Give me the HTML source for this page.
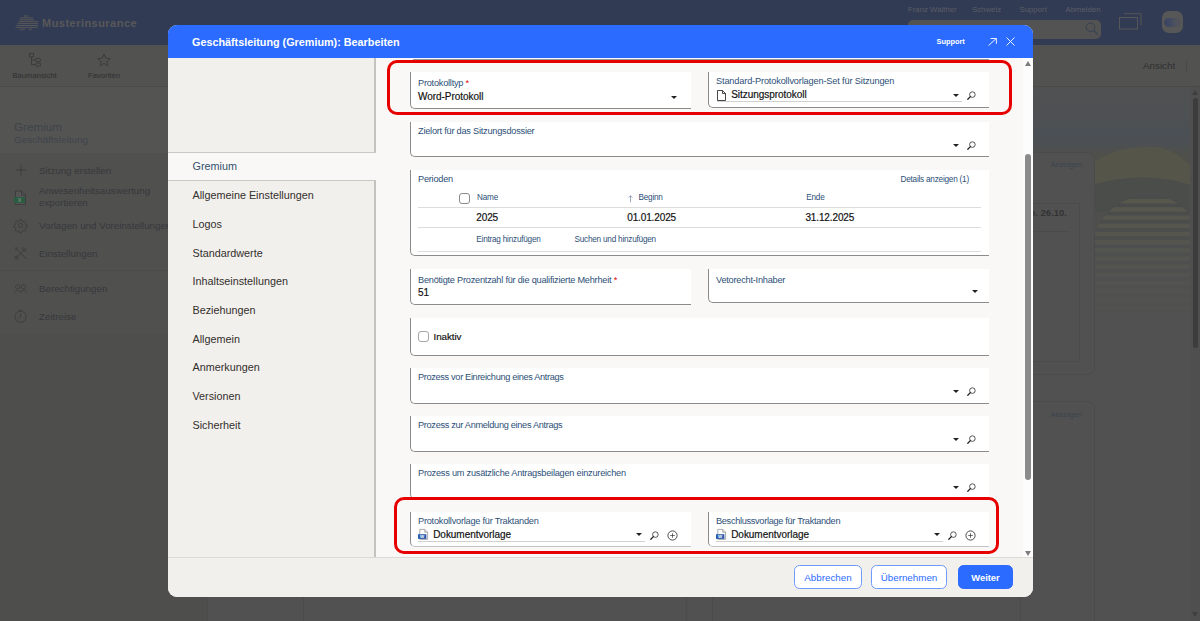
<!DOCTYPE html>
<html lang="de">
<head>
<meta charset="utf-8">
<title>Geschäftsleitung (Gremium): Bearbeiten</title>
<style>
*{box-sizing:border-box;margin:0;padding:0}
html,body{width:1200px;height:621px;overflow:hidden}
body{font-family:"Liberation Sans",sans-serif;background:#50504f;position:relative;color:#222}
.abs{position:absolute}
/* ---------- dimmed background app ---------- */
#topbar{position:absolute;left:0;top:0;width:1200px;height:45px;background:#323b54}
#toolbar{position:absolute;left:0;top:45px;width:1200px;height:42px;background:#525251;border-bottom:1px solid #4a4a49}
.bgt{position:absolute;white-space:nowrap;color:#303030;font-size:10px;line-height:12px}
.side{position:absolute;white-space:nowrap;color:#37383b;font-size:9.75px;line-height:12px;left:39px}
/* ---------- dialog ---------- */
#dlg{position:absolute;left:168px;top:25px;width:865px;height:571.500px;border-radius:9px;background:#f9f8f6;overflow:hidden}
#dhead{position:absolute;left:0;top:0;width:865px;height:33px;background:#2b6bff;color:#fff}
#dtitle{position:absolute;left:24px;top:9.500px;font-size:10.8px;font-weight:bold;line-height:15px;white-space:nowrap}
#dnav{position:absolute;left:0;top:33px;width:208px;height:499px;background:#f2f0ec;border-right:2px solid #c4c3c0}
#dnavsel{position:absolute;left:0;top:94px;width:208px;height:29px;background:#f9f8f6;border-top:1px solid #c9c8c5;border-bottom:1px solid #c9c8c5}
.ni{position:absolute;left:24.500px;font-size:10.800px;line-height:14px;color:#322f2d;white-space:nowrap}
#dfoot{position:absolute;left:0;top:532px;width:865px;height:40px;background:#f2f0ec;border-top:1px solid #dcdad6}
.btn{position:absolute;top:7.300px;height:24px;border-radius:5.500px;font-size:9.800px;line-height:23px;text-align:center;border:1px solid #6e9aff;color:#2b6bff;background:#fff}
.btn.pri{background:#2b6bff;border-color:#2b6bff;color:#fff;font-weight:bold;font-size:9.4px}
/* fields (coordinates are page coordinates inside #content which is at 0,0 of page) */
#content{position:absolute;left:0;top:0;width:1200px;height:621px;pointer-events:none}
.fld{position:absolute;background:#fff;border-left:1px solid #8b8b8b;border-bottom:1px solid #8b8b8b;border-bottom-left-radius:5px}
.lbl{position:absolute;left:7px;top:6.200px;font-size:9.200px;letter-spacing:-0.230px;line-height:11px;color:#2d4f78;white-space:nowrap}
.val{position:absolute;font-size:10px;letter-spacing:-0.040px;-webkit-text-stroke:0.180px #111;line-height:13px;color:#111;white-space:nowrap}
.req{color:#e00000}
.uline{position:absolute;height:1px;background:#d0d0d0}
.red{position:absolute;border:3.700px solid #e60000;border-radius:10px}
.tri{position:absolute;width:0;height:0;border-left:3px solid transparent;border-right:3px solid transparent;border-top:3.300px solid #222}
.cb{position:absolute;width:11px;height:11px;border:1px solid #8a8a8a;border-radius:3px;background:#fff}
.tl{position:absolute;height:1px;background:#dddcda}
.th{position:absolute;font-size:8.200px;letter-spacing:-0.220px;line-height:10px;color:#2d4f78;white-space:nowrap}
.td{position:absolute;font-size:10px;letter-spacing:-0.120px;-webkit-text-stroke:0.180px #111;line-height:13px;color:#111;white-space:nowrap}
svg{position:absolute;overflow:visible}
</style>
</head>
<body>
<div id="topbar"></div>
<div id="toolbar"></div>
<div id="bgapp">
<!-- dimmed background application -->
<div class="abs" style="left:0;top:87px;width:207px;height:65.500px;background:#545453"></div>
<div class="abs" style="left:0;top:152.500px;width:207px;height:181.500px;background:#50504f"></div>
<div class="abs" style="left:0;top:334px;width:207px;height:287px;background:#4e4e4d"></div>
<div class="abs" style="left:207px;top:87px;width:993px;height:534px;background:#515151"></div>
<div class="abs" style="left:0;top:269.5px;width:207px;height:1px;background:#4a4a49"></div>
<!-- logo -->
<svg style="left:15px;top:14.500px" width="24" height="16" viewBox="0 0 24 16"><g stroke="#585858" stroke-width="1" fill="none"><path d="M9 1H13M5 2.900H18M4.500 4.800H19M3.500 6.700H23.500M2.500 8.600H23M1.500 10.500H23M0.500 12.400H22.500M4.500 14.300H10M14 14.300H17"/></g></svg>
<div class="abs" style="left:42px;top:16px;font-size:11px;line-height:15px;font-weight:bold;color:#585858;letter-spacing:0.470px;white-space:nowrap">Musterinsurance</div>
<!-- toolbar -->
<svg style="left:29px;top:53px" width="13" height="14" viewBox="0 0 13 14"><g stroke="#3a3a3a" stroke-width="0.9" fill="none"><rect x="0.5" y="0.5" width="4" height="3.4"/><rect x="6.8" y="5.4" width="4.6" height="3.2" rx="0.8"/><rect x="6.8" y="10" width="4.6" height="3.2" rx="0.8"/><path d="M2.5 4V11.6H6.8M2.5 7H6.8"/></g></svg>
<svg style="left:97px;top:53px" width="14" height="14" viewBox="0 0 14 14"><path d="M7 1 L8.8 5.2 L13.3 5.5 L9.8 8.4 L10.9 12.8 L7 10.4 L3.1 12.8 L4.2 8.4 L0.7 5.5 L5.2 5.2 Z" fill="none" stroke="#3a3a3a" stroke-width="0.9" stroke-linejoin="round"/></svg>
<div class="bgt" style="left:12.500px;top:70px;font-size:7.65px">Baumansicht</div>
<div class="bgt" style="left:88px;top:70px;font-size:7.7px">Favoriten</div>
<div class="bgt" style="left:1143px;top:59px;font-size:9.8px;line-height:14px">Ansicht</div>
<!-- sidebar -->
<div class="abs" style="left:14px;top:119px;font-size:11.700px;line-height:15px;color:#3e434a;white-space:nowrap">Gremium</div>
<div class="abs" style="left:14px;top:133px;font-size:9.950px;line-height:13px;color:#3f444b;white-space:nowrap">Geschäftsleitung</div>
<svg style="left:15px;top:164px" width="12" height="12" viewBox="0 0 12 12"><path d="M6 0.5V11.5M0.5 6H11.5" stroke="#3b3b3b" stroke-width="0.8" fill="none"/></svg>
<div class="side" style="top:164.500px">Sitzung erstellen</div>
<svg style="left:14px;top:190px" width="12" height="15" viewBox="0 0 12 15"><path d="M1.500 1H7.500L11.500 5V14.500H1.500Z" fill="#555555" stroke="#3b3b3b" stroke-width="0.900"/><path d="M7.500 1V5H11.500" fill="none" stroke="#3b3b3b" stroke-width="0.900"/><rect x="0" y="7" width="11" height="6" fill="#2b5c42"/><text x="5.700" y="11.700" font-size="5.500" font-weight="bold" fill="#708a7c" text-anchor="middle" font-family="Liberation Sans, sans-serif">X</text></svg>
<div class="side" style="top:185.200px">Anwesenheitsauswertung</div>
<div class="side" style="top:197.400px">exportieren</div>
<svg style="left:14px;top:218.5px" width="13" height="13" viewBox="0 0 13 13"><g fill="none" stroke="#3b3b3b" stroke-width="0.8"><circle cx="6.5" cy="6.5" r="2.1"/><path d="M5.5 0.6h2l.4 1.6 1.2.5 1.4-.9 1.4 1.4-.9 1.4.5 1.2 1.6.4v2l-1.6.4-.5 1.2.9 1.4-1.4 1.4-1.4-.9-1.2.5-.4 1.6h-2l-.4-1.6-1.2-.5-1.4.9-1.4-1.4.9-1.4-.5-1.2-1.600-.4v-2l1.600-.4.5-1.200-.9-1.400 1.400-1.400 1.400.9 1.200-.5z"/></g></svg>
<div class="side" style="top:219.800px">Vorlagen und Voreinstellungen</div>
<svg style="left:14px;top:246px" width="14" height="14" viewBox="0 0 14 14"><g fill="none" stroke="#3b3b3b" stroke-width="0.9"><path d="M1 1.5L12.5 13M12.5 1.5L1.5 12.5"/><circle cx="2.6" cy="11.6" r="1.6"/><path d="M9 1.2a2.800 2.800 0 0 0 3.600 3.600"/><path d="M1.2 4.200L4 1.400"/></g></svg>
<div class="side" style="top:247.800px">Einstellungen</div>
<svg style="left:14px;top:284px" width="13" height="10" viewBox="0 0 13 10"><g fill="none" stroke="#3b3b3b" stroke-width="0.8"><circle cx="3.6" cy="2.800" r="2.100"/><circle cx="9.4" cy="2.800" r="2.100"/><path d="M0.5 8.500C1 5.800 6.200 5.800 6.500 8.500M6.500 8.500C7 5.800 12.200 5.800 12.600 8.500"/></g></svg>
<div class="side" style="top:283px">Berechtigungen</div>
<svg style="left:14px;top:310px" width="13" height="13" viewBox="0 0 13 13"><g fill="none" stroke="#3b3b3b" stroke-width="0.8"><circle cx="6.500" cy="6.800" r="5.600"/><path d="M6.500 3.200V7L4.600 8.600M4.500 0.500H8"/></g></svg>
<div class="side" style="top:310.5px">Zeitreise</div>
<!-- top right -->
<div class="abs" style="left:908px;top:5px;font-size:7.800px;line-height:10px;color:#5b5d64;white-space:nowrap">Franz Walther</div>
<div class="abs" style="left:972px;top:5px;font-size:7.800px;line-height:10px;color:#5b5d64;white-space:nowrap">Schweiz</div>
<div class="abs" style="left:1019.5px;top:5px;font-size:7.800px;line-height:10px;color:#5b5d64;white-space:nowrap">Support</div>
<div class="abs" style="left:1065.5px;top:5px;font-size:7.800px;line-height:10px;color:#5b5d64;white-space:nowrap">Abmelden</div>
<div class="abs" style="left:908px;top:20px;width:193px;height:18.500px;border-radius:5px;background:#535353"></div>
<svg style="left:1084.500px;top:22px" width="14" height="14" viewBox="0 0 14 14"><circle cx="5.500" cy="5.300" r="4.300" fill="none" stroke="#394153" stroke-width="1"/><path d="M8.700 8.500L12.800 12.600" stroke="#394153" stroke-width="1.300"/></svg>
<svg style="left:1119px;top:13px" width="24" height="18" viewBox="0 0 24 18"><g fill="none" stroke="#575757" stroke-width="1"><rect x="0.500" y="4.500" width="18" height="11.500"/><path d="M5 0.700H22V12.500"/></g></svg>
<div class="abs" style="left:1161.500px;top:11.300px;width:21.500px;height:21.500px;border-radius:7px;background:#575757"></div>
<div class="abs" style="left:1164px;top:18px;width:16.500px;height:8.500px;border-radius:4.500px;background:linear-gradient(90deg,#3a4460 0%,#3f4964 30%,#52545c 75%,#4e515a 100%)"></div>
<!-- right content: image, cards, scrollbar -->
<svg style="left:1033px;top:87px" width="157" height="270" viewBox="0 0 157 270">
<defs>
<linearGradient id="sky" x1="0" y1="0" x2="0" y2="1"><stop offset="0" stop-color="#4f5152"/><stop offset="0.130" stop-color="#4e5153"/><stop offset="0.170" stop-color="#4a4f55"/><stop offset="0.210" stop-color="#4c5053"/><stop offset="0.250" stop-color="#4f504b"/><stop offset="0.600" stop-color="#4e4f4b"/><stop offset="0.800" stop-color="#50504e"/><stop offset="1" stop-color="#515151"/></linearGradient>
<linearGradient id="fade" x1="0" y1="0" x2="0" y2="1"><stop offset="0" stop-color="#515151" stop-opacity="0"/><stop offset="0.450" stop-color="#515151" stop-opacity="0"/><stop offset="0.720" stop-color="#515151" stop-opacity="0.750"/><stop offset="0.900" stop-color="#515151" stop-opacity="1"/><stop offset="1" stop-color="#515151" stop-opacity="1"/></linearGradient>
<clipPath id="dome"><path d="M58 270 V170 C58 130 88 108 116 108 C144 108 170 130 170 170 V270 Z"/></clipPath>
</defs>
<rect width="157" height="270" fill="url(#sky)"/>
<path d="M45 92 C62 70 80 62 110 60 C130 58 145 66 157 78 V110 H45Z" fill="#55554a"/>
<path d="M55 100 C80 90 120 86 157 98 V125 H55Z" fill="#4b4d4b"/>
<g clip-path="url(#dome)"><rect x="55" y="105" width="105" height="165" fill="#4a4c4c"/><g fill="#57574e"><rect x="55" y="112" width="105" height="4.500"/><rect x="55" y="120.2" width="105" height="4.500"/><rect x="55" y="128.4" width="105" height="4.500"/><rect x="55" y="136.6" width="105" height="4.500"/><rect x="55" y="144.8" width="105" height="4.500"/><rect x="55" y="153" width="105" height="4.500"/><rect x="55" y="161.2" width="105" height="4.500"/><rect x="55" y="169.4" width="105" height="4.500"/><rect x="55" y="177.6" width="105" height="4.500"/><rect x="55" y="185.8" width="105" height="4.500"/><rect x="55" y="194" width="105" height="4.500"/><rect x="55" y="202.2" width="105" height="4.500"/><rect x="55" y="210.4" width="105" height="4.500"/><rect x="55" y="218.6" width="105" height="4.500"/><rect x="55" y="226.8" width="105" height="4.500"/><rect x="55" y="235" width="105" height="4.500"/><rect x="55" y="243.2" width="105" height="4.500"/><rect x="55" y="251.4" width="105" height="4.500"/><rect x="55" y="259.6" width="105" height="4.500"/><rect x="55" y="267.8" width="105" height="4.500"/></g></g>
<rect width="157" height="270" fill="url(#fade)"/>
</svg>
<div class="abs" style="left:1020px;top:152px;width:74.500px;height:223px;border-radius:0 8px 8px 0;background:#515151;border:1px solid #4b4b4b"></div>
<div class="abs" style="left:1020px;top:203px;width:60px;height:159px;border:1px solid #4c4c4c"></div><div class="abs" style="left:1033px;top:231px;width:37px;height:1px;background:#4b4b4b"></div>
<div class="abs" style="left:1020px;top:400.500px;width:74.500px;height:240px;border-radius:0 8px 0 0;background:#515151;border:1px solid #4b4b4b"></div>
<div class="abs" style="left:1050.500px;top:160px;font-size:7.600px;line-height:10px;color:#3b444e;white-space:nowrap">Anzeigen</div>
<div class="abs" style="left:1050.500px;top:409.500px;font-size:7.600px;line-height:10px;color:#3b444e;white-space:nowrap">Anzeigen</div>
<div class="abs" style="left:1029.500px;top:206.500px;font-size:9.500px;line-height:12px;font-weight:bold;color:#333;white-space:nowrap">o. 26.10.</div>
<div class="abs" style="left:1190px;top:87px;width:10px;height:534px;background:#4f4f4f"></div>
<div class="abs" style="left:1192.500px;top:98px;width:5px;height:250px;border-radius:3px;background:#3c3c3c"></div>
<div class="abs" style="left:1191.500px;top:90px;width:0;height:0;border-left:3.500px solid transparent;border-right:3.500px solid transparent;border-bottom:5px solid #3f3f3f"></div>
<div class="abs" style="left:1191.500px;top:612px;width:0;height:0;border-left:3.500px solid transparent;border-right:3.500px solid transparent;border-top:5px solid #3f3f3f"></div>
<!-- faint panel edges beneath the dialog -->
<div class="abs" style="left:207px;top:597px;width:1px;height:24px;background:#4b4b4b"></div>
<div class="abs" style="left:303px;top:597px;width:1px;height:24px;background:#4b4b4b"></div>
<div class="abs" style="left:712px;top:597px;width:1px;height:24px;background:#4b4b4b"></div>
<div class="abs" style="left:686px;top:597px;width:1px;height:24px;background:#4c4c4c"></div>
<div class="abs" style="left:1186px;top:60px;width:1px;height:12px;background:#4a4a4a"></div>
</div>

<div id="dlg">
  <div id="dhead">
    <div id="dtitle">Geschäftsleitung (Gremium): Bearbeiten</div>
    <div class="abs" style="left:768.500px;top:11.500px;font-size:7.400px;line-height:10px;font-weight:bold;color:#fff;white-space:nowrap">Support</div>
    <svg style="left:819.500px;top:12.500px" width="9" height="8" viewBox="0 0 9 8"><path d="M0.500 7.500L8.200 0.600M2.600 0.500H8.400V5.800" fill="none" stroke="#fff" stroke-width="0.900"/></svg>
    <svg style="left:837.500px;top:12px" width="9" height="9" viewBox="0 0 9 9"><path d="M0.500 0.500L8.500 8.500M8.500 0.500L0.500 8.500" fill="none" stroke="#fff" stroke-width="0.900"/></svg>
  </div>
  <div id="dnav">
    <div id="dnavsel"></div>
    <div class="ni" style="top:101.10px;color:#34506f">Gremium</div>
    <div class="ni" style="top:130.00px">Allgemeine Einstellungen</div>
    <div class="ni" style="top:158.70px">Logos</div>
    <div class="ni" style="top:187.50px">Standardwerte</div>
    <div class="ni" style="top:216.20px">Inhaltseinstellungen</div>
    <div class="ni" style="top:244.90px">Beziehungen</div>
    <div class="ni" style="top:273.70px">Allgemein</div>
    <div class="ni" style="top:302.40px">Anmerkungen</div>
    <div class="ni" style="top:331.20px">Versionen</div>
    <div class="ni" style="top:359.90px">Sicherheit</div>
  </div>
  <div id="dfoot">
    <div class="btn" style="left:626px;width:68px">Abbrechen</div>
    <div class="btn" style="left:703px;width:76px">Übernehmen</div>
    <div class="btn pri" style="left:790px;width:55px">Weiter</div>
  </div>
</div>
<div id="content">
<div class="abs" style="left:413px;top:58.700px;width:576px;height:1px;background:#9a9a9a"></div>
<div class="fld" style="left:410px;top:72px;width:281px;height:36.5px"><div class="lbl">Protokolltyp <span class="req">*</span></div><div class="val" style="left:7px;top:18.2px">Word-Protokoll</div><div class="tri" style="left:260px;top:24px"></div></div>
<div class="fld" style="left:708px;top:72px;width:281px;height:36px"><div class="lbl" style="top:3.700px;letter-spacing:-0.150px">Standard-Protokollvorlagen-Set für Sitzungen</div><svg style="left:8px;top:17.5px" width="9" height="11" viewBox="0 0 9 11"><path d="M0.5 0.5 H5.5 L8.5 3.5 V10.5 H0.5 Z M5.5 0.5 V3.5 H8.5" fill="#fff" stroke="#333" stroke-width="0.9" stroke-linejoin="round"/></svg><div class="val" style="left:22.200px;top:16.4px">Sitzungsprotokoll</div><div class="uline" style="left:8px;top:29px;width:245px"></div><div class="tri" style="left:244px;top:22px"></div><svg style="left:258px;top:19px" width="9" height="9" viewBox="0 0 9 9"><circle cx="5.400" cy="3.600" r="2.800" fill="none" stroke="#2a2a2a" stroke-width="0.800"/><path d="M3.400 5.600 L0.800 8.200" stroke="#222" stroke-width="1.300" fill="none" stroke-linecap="round"/></svg></div>
<div class="fld" style="left:410px;top:121.5px;width:579px;height:35px"><div class="lbl" style="top:4.6px">Zielort für das Sitzungsdossier</div><div class="tri" style="left:542px;top:22px"></div><svg style="left:556px;top:19px" width="9" height="9" viewBox="0 0 9 9"><circle cx="5.400" cy="3.600" r="2.800" fill="none" stroke="#2a2a2a" stroke-width="0.800"/><path d="M3.400 5.600 L0.800 8.200" stroke="#222" stroke-width="1.300" fill="none" stroke-linecap="round"/></svg></div>
<div class="fld" style="left:410px;top:170px;width:579px;height:86px"><div class="lbl" style="top:3.8px">Perioden</div><div class="th" style="left:489.500px;top:4.800px">Details anzeigen (1)</div><div class="cb" style="left:47.500px;top:22.500px"></div><div class="th" style="left:66px;top:22.800px">Name</div><svg style="left:216.500px;top:24.500px" width="5" height="8" viewBox="0 0 5 8"><path d="M2.500 7.200V0.800M0.700 2.600L2.500 0.700L4.300 2.600" fill="none" stroke="#5a7191" stroke-width="0.600"/></svg><div class="th" style="left:227.500px;top:22.800px">Beginn</div><div class="th" style="left:395.300px;top:22.800px">Ende</div><div class="tl" style="left:7px;top:37px;width:562.500px"></div><div class="td" style="left:65.300px;top:40.7px">2025</div><div class="td" style="left:216.200px;top:40.7px">01.01.2025</div><div class="td" style="left:394.400px;top:40.7px">31.12.2025</div><div class="tl" style="left:7px;top:57px;width:562.500px"></div><div class="th" style="left:65.300px;top:64.800px">Eintrag hinzufügen</div><div class="th" style="left:163.500px;top:64.800px">Suchen und hinzufügen</div><div class="tl" style="left:7px;top:81px;width:562.500px"></div></div>
<div class="fld" style="left:410px;top:268.5px;width:281px;height:36.5px"><div class="lbl">Benötigte Prozentzahl für die qualifizierte Mehrheit <span class="req">*</span></div><div class="val" style="left:7px;top:17.2px">51</div></div>
<div class="fld" style="left:708px;top:268.5px;width:281px;height:34px"><div class="lbl">Vetorecht-Inhaber</div><div class="tri" style="left:263px;top:21px"></div></div>
<div class="fld" style="left:410px;top:317.5px;width:579px;height:38px"><div class="cb" style="left:6.800px;top:13.500px;border-color:#a6a6a6"></div><div class="val" style="left:22.600px;top:12.600px;font-size:9.800px;letter-spacing:-0.080px">Inaktiv</div></div>
<div class="fld" style="left:410px;top:367.5px;width:579px;height:36px"><div class="lbl" style="top:4.6px;letter-spacing:-0.330px">Prozess vor Einreichung eines Antrags</div><div class="tri" style="left:542px;top:22px"></div><svg style="left:556px;top:19px" width="9" height="9" viewBox="0 0 9 9"><circle cx="5.400" cy="3.600" r="2.800" fill="none" stroke="#2a2a2a" stroke-width="0.800"/><path d="M3.400 5.600 L0.800 8.200" stroke="#222" stroke-width="1.300" fill="none" stroke-linecap="round"/></svg></div>
<div class="fld" style="left:410px;top:415.5px;width:579px;height:36px"><div class="lbl" style="top:4.6px;letter-spacing:-0.310px">Prozess zur Anmeldung eines Antrags</div><div class="tri" style="left:542px;top:22px"></div><svg style="left:556px;top:19px" width="9" height="9" viewBox="0 0 9 9"><circle cx="5.400" cy="3.600" r="2.800" fill="none" stroke="#2a2a2a" stroke-width="0.800"/><path d="M3.400 5.600 L0.800 8.200" stroke="#222" stroke-width="1.300" fill="none" stroke-linecap="round"/></svg></div>
<div class="fld" style="left:410px;top:464px;width:579px;height:35px"><div class="lbl" style="top:3.8px">Prozess um zusätzliche Antragsbeilagen einzureichen</div><div class="tri" style="left:542px;top:22px"></div><svg style="left:556px;top:19px" width="9" height="9" viewBox="0 0 9 9"><circle cx="5.400" cy="3.600" r="2.800" fill="none" stroke="#2a2a2a" stroke-width="0.800"/><path d="M3.400 5.600 L0.800 8.200" stroke="#222" stroke-width="1.300" fill="none" stroke-linecap="round"/></svg></div>
<div class="fld" style="left:410px;top:512px;width:281px;height:34.500px;border-bottom-color:#c4c4c4"><div class="lbl" style="top:3.8px">Protokollvorlage für Traktanden</div><svg style="left:7.200px;top:17px" width="10" height="11" viewBox="0 0 10 11"><path d="M1.800 0.400 H6.800 L9.600 3.200 V10.400 H1.800 Z" fill="#fff" stroke="#8a8a8a" stroke-width="0.700" stroke-linejoin="round"/><path d="M6.800 0.400 V3.200 H9.600" fill="#e4e4e4" stroke="#8a8a8a" stroke-width="0.700" stroke-linejoin="round"/><rect x="0" y="5.200" width="8.400" height="4.700" fill="#2a5db0"/><text x="4.200" y="9.100" font-size="4.400" font-weight="bold" fill="#fff" text-anchor="middle" font-family="Liberation Sans, sans-serif">W</text></svg><div class="val" style="left:22.200px;top:16.2px">Dokumentvorlage</div><div class="uline" style="left:7.200px;top:29px;width:227px"></div><div class="tri" style="left:225px;top:21px"></div><svg style="left:239px;top:18.5px" width="9" height="9" viewBox="0 0 9 9"><circle cx="5.400" cy="3.600" r="2.800" fill="none" stroke="#2a2a2a" stroke-width="0.800"/><path d="M3.400 5.600 L0.800 8.200" stroke="#222" stroke-width="1.300" fill="none" stroke-linecap="round"/></svg><svg style="left:256.300px;top:17.800px" width="11" height="11" viewBox="0 0 11 11"><circle cx="5.500" cy="5.500" r="4.600" fill="none" stroke="#222" stroke-width="0.800"/><path d="M5.500 3.200 V7.800 M3.200 5.500 H7.800" stroke="#333" stroke-width="0.700" fill="none"/></svg></div>
<div class="fld" style="left:708px;top:512px;width:281px;height:34.500px;border-bottom-color:#c4c4c4"><div class="lbl" style="top:3.8px;letter-spacing:-0.310px">Beschlussvorlage für Traktanden</div><svg style="left:7.200px;top:17px" width="10" height="11" viewBox="0 0 10 11"><path d="M1.800 0.400 H6.800 L9.600 3.200 V10.400 H1.800 Z" fill="#fff" stroke="#8a8a8a" stroke-width="0.700" stroke-linejoin="round"/><path d="M6.800 0.400 V3.200 H9.600" fill="#e4e4e4" stroke="#8a8a8a" stroke-width="0.700" stroke-linejoin="round"/><rect x="0" y="5.200" width="8.400" height="4.700" fill="#2a5db0"/><text x="4.200" y="9.100" font-size="4.400" font-weight="bold" fill="#fff" text-anchor="middle" font-family="Liberation Sans, sans-serif">W</text></svg><div class="val" style="left:22.200px;top:16.2px">Dokumentvorlage</div><div class="uline" style="left:7.200px;top:29px;width:227px"></div><div class="tri" style="left:225px;top:21px"></div><svg style="left:239px;top:18.5px" width="9" height="9" viewBox="0 0 9 9"><circle cx="5.400" cy="3.600" r="2.800" fill="none" stroke="#2a2a2a" stroke-width="0.800"/><path d="M3.400 5.600 L0.800 8.200" stroke="#222" stroke-width="1.300" fill="none" stroke-linecap="round"/></svg><svg style="left:256.300px;top:17.800px" width="11" height="11" viewBox="0 0 11 11"><circle cx="5.500" cy="5.500" r="4.600" fill="none" stroke="#222" stroke-width="0.800"/><path d="M5.500 3.200 V7.800 M3.200 5.500 H7.800" stroke="#333" stroke-width="0.700" fill="none"/></svg></div>
<div class="red" style="left:386.800px;top:59.700px;width:625px;height:55px"></div>
<div class="red" style="left:394.200px;top:496.800px;width:604.500px;height:57px"></div>
<div class="abs" style="left:1023px;top:58px;width:10px;height:499px;background:#fcfcfc"></div><div class="abs" style="left:1025.300px;top:154px;width:5.700px;height:326px;background:#8b8b8b;border-radius:3px"></div><div class="abs" style="left:1024.500px;top:61.300px;width:0;height:0;border-left:3.5px solid transparent;border-right:3.5px solid transparent;border-bottom:5px solid #7d7d7d"></div><div class="abs" style="left:1024.500px;top:550.800px;width:0;height:0;border-left:3.5px solid transparent;border-right:3.5px solid transparent;border-top:5px solid #7d7d7d"></div>
</div>
</body>
</html>
